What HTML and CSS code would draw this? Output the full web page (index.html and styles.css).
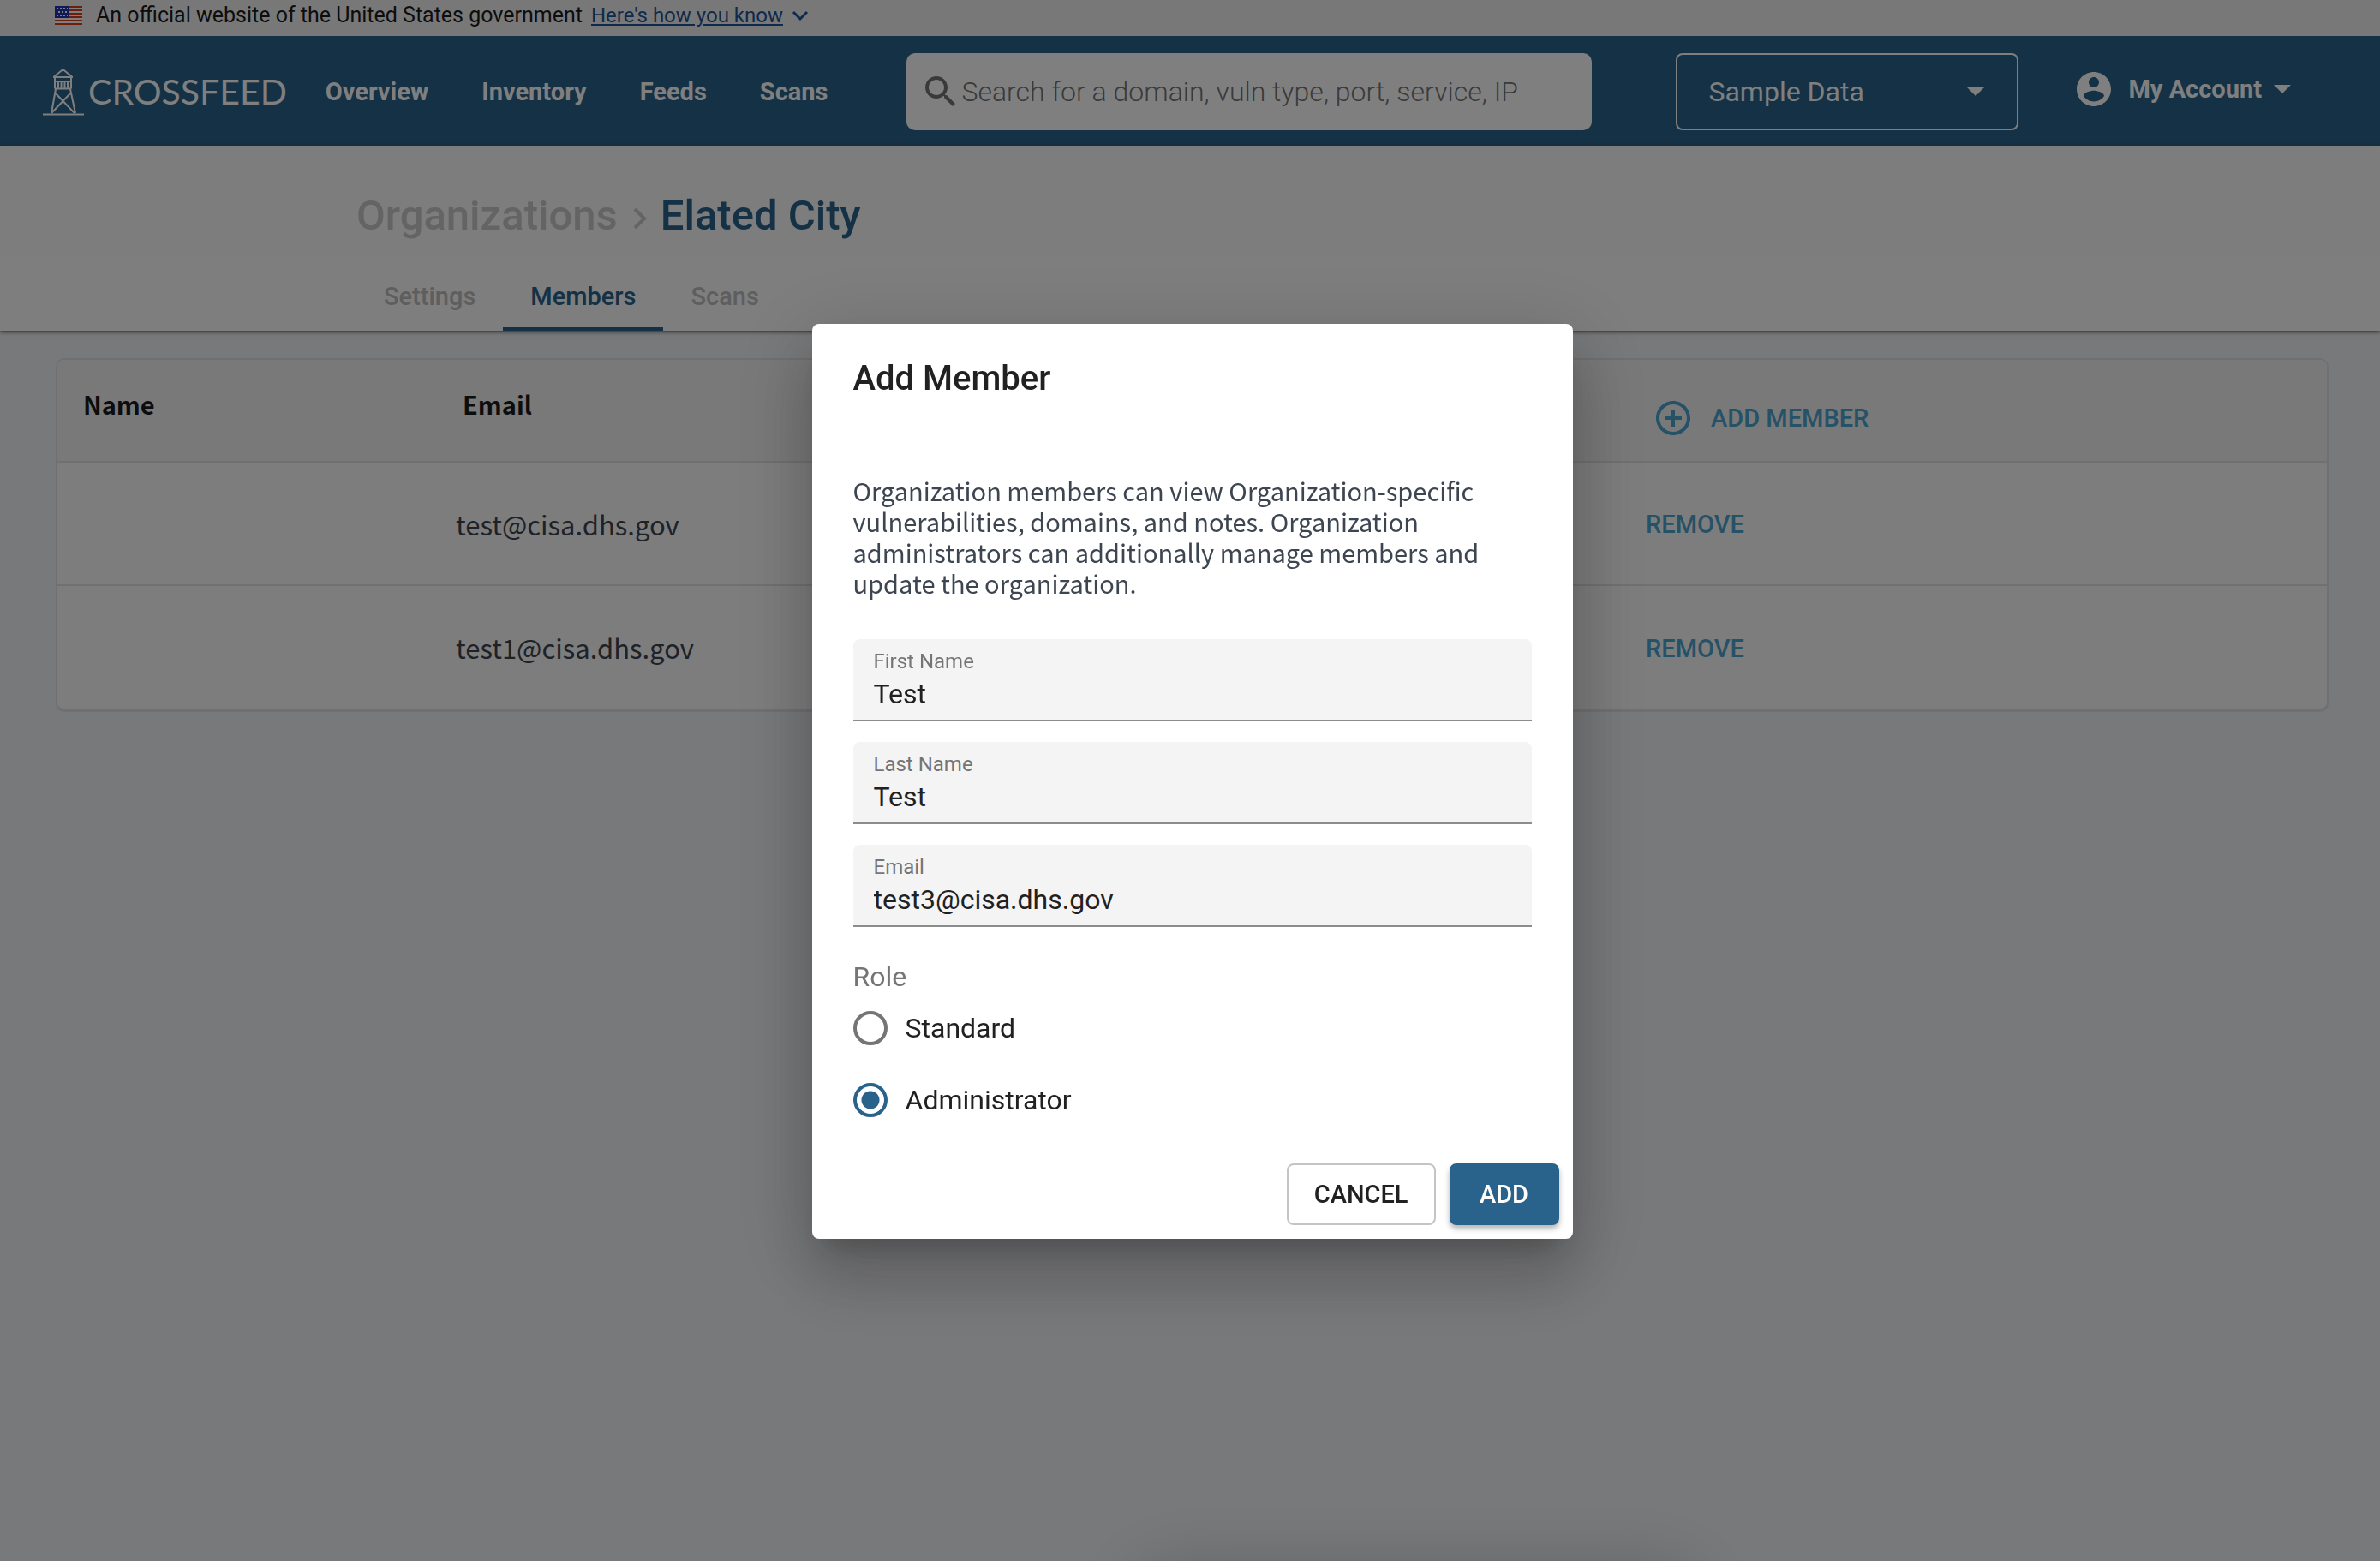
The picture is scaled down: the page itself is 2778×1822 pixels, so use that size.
FILE: index.html
```html
<!DOCTYPE html>
<html lang="en">
<head>
<meta charset="utf-8">
<meta name="viewport" content="width=device-width, initial-scale=1">
<title>Crossfeed - Elated City</title>
<link rel="stylesheet" href="styles.css">
</head>
<body>
<div class="banner">
  <svg class="flag" viewBox="0 0 32 22" aria-hidden="true">
    <rect width="32" height="22" fill="#fff"/>
    <path d="M0 1h32M0 5h32M0 9h32M0 13h32M0 17h32M0 21h32" stroke="#db3e1f" stroke-width="2"/>
    <rect width="16" height="14" fill="#1e33b1"/>
    <path d="M2 3h13M4 7h11M2 11h13" stroke="#fff" stroke-width="2" stroke-dasharray="2 2"/>
  </svg>
  <span>An official website of the United States government</span>
  <a class="banner-link" href="#">Here's how you know</a>
  <svg class="banner-chevron" viewBox="0 0 20 14" aria-hidden="true"><path d="M2 3l8 8 8-8" fill="none" stroke="#1f5599" stroke-width="3"/></svg>
</div>

<header class="header">
  <a class="logo" href="#">
    <svg class="logo-tower" viewBox="0 0 48 56" aria-hidden="true">
      <g fill="none" stroke="#fff" stroke-width="2">
        <path d="M13 10.500L23.500 2L34 10.500M12 11h23M14 12v12M33 12v12M14 16h19M13.500 24.500h20M18 16v8M21.500 16v8M25.500 16v8M29 16v8"/>
        <path d="M15 25L10 53M32 25L38 53M14 29L37 53M33 29L10 53"/>
        <path d="M0 54.500h48"/>
      </g>
    </svg>
    <span class="logo-name">CROSSFEED</span>
  </a>
  <nav class="nav">
    <a href="#">Overview</a>
    <a href="#">Inventory</a>
    <a href="#">Feeds</a>
    <a href="#">Scans</a>
  </nav>
  <label class="search">
    <svg class="search-icon" viewBox="0 0 24 24" aria-hidden="true"><path fill="#757575" d="M15.500 14h-.79l-.28-.27C15.410 12.590 16 11.110 16 9.500 16 5.910 13.090 3 9.500 3S3 5.910 3 9.500 5.910 16 9.500 16c1.610 0 3.090-.59 4.230-1.570l.27.28v.79l5 4.990L20.490 19l-4.990-5zm-6 0C7.010 14 5 11.990 5 9.500S7.010 5 9.500 5 14 7.010 14 9.500 11.990 14 9.500 14z"/></svg>
    <input type="text" aria-label="Search" placeholder="Search for a domain, vuln type, port, service, IP">
  </label>
  <div class="org-select">
    <select aria-label="Organization"><option>Sample Data</option></select>
    <svg class="caret" viewBox="0 0 20 10" aria-hidden="true"><path d="M0 0h20L10 10z" fill="#fff"/></svg>
  </div>
  <button class="account" type="button">
    <svg class="account-icon" viewBox="0 0 24 24" aria-hidden="true"><path fill="#fff" d="M12 2C6.480 2 2 6.480 2 12s4.480 10 10 10 10-4.480 10-10S17.520 2 12 2zm0 3c1.660 0 3 1.340 3 3s-1.340 3-3 3-3-1.340-3-3 1.340-3 3-3zm0 14.200c-2.500 0-4.710-1.280-6-3.220.03-1.990 4-3.080 6-3.080 1.990 0 5.970 1.090 6 3.080-1.290 1.940-3.500 3.220-6 3.220z"/></svg>
    <span>My Account</span>
    <svg class="caret" viewBox="0 0 20 10" aria-hidden="true"><path d="M0 0h20L10 10z" fill="#fff"/></svg>
  </button>
</header>

<section class="page-head">
  <h1 class="crumbs"><a href="#">Organizations</a><svg class="crumb-arrow" viewBox="0 0 16 26" aria-hidden="true"><path d="M2 2l11 11L2 24" fill="none" stroke="#c8c8c8" stroke-width="4"/></svg><span>Elated City</span></h1>
  <nav class="tabs">
    <a href="#">Settings</a>
    <a class="active" href="#">Members</a>
    <a href="#">Scans</a>
  </nav>
</section>

<main class="content">
  <div class="card">
    <table class="members">
      <colgroup><col class="col-name"><col><col class="col-actions"></colgroup>
      <thead>
        <tr>
          <th scope="col">Name</th>
          <th scope="col">Email</th>
          <th scope="col">
            <button class="text-button add-member" type="button">
              <svg class="plus" viewBox="0 0 24 24" aria-hidden="true"><path fill="#4ba4cf" d="M13 7h-2v4H7v2h4v4h2v-4h4v-2h-4V7zm-1-5C6.480 2 2 6.480 2 12s4.480 10 10 10 10-4.480 10-10S17.520 2 12 2zm0 18c-4.410 0-8-3.590-8-8s3.590-8 8-8 8 3.590 8 8-3.590 8-8 8z"/></svg>
              ADD MEMBER
            </button>
          </th>
        </tr>
      </thead>
      <tbody>
        <tr><td></td><td>test@cisa.dhs.gov</td><td><button class="text-button" type="button">REMOVE</button></td></tr>
        <tr><td></td><td>test1@cisa.dhs.gov</td><td><button class="text-button" type="button">REMOVE</button></td></tr>
      </tbody>
    </table>
  </div>
</main>

<div class="backdrop">
  <form class="dialog" role="dialog" aria-labelledby="dialog-title">
    <h2 id="dialog-title">Add Member</h2>
    <div class="dialog-body">
      <p>Organization members can view Organization-specific vulnerabilities, domains, and notes. Organization administrators can additionally manage members and update the organization.</p>
      <div class="fields">
        <label class="field"><span>First Name</span><input type="text" value="Test"></label>
        <label class="field"><span>Last Name</span><input type="text" value="Test"></label>
        <label class="field"><span>Email</span><input type="text" value="test3@cisa.dhs.gov"></label>
      </div>
      <fieldset class="roles">
        <legend>Role</legend>
        <label><input type="radio" name="role" value="user">Standard</label>
        <label><input type="radio" name="role" value="admin" checked>Administrator</label>
      </fieldset>
    </div>
    <div class="actions">
      <button class="button" type="button">CANCEL</button>
      <button class="button primary" type="button">ADD</button>
    </div>
  </form>
</div>
</body>
</html>
```
FILE: styles.css
```css
:root {
  --primary: #29628a;
  --sans: Roboto, "Liberation Sans", sans-serif;
  --body: "Noto Sans CJK SC", "Noto Sans", sans-serif;
}

* { box-sizing: border-box; }

body {
  margin: 0;
  min-height: 100vh;
  background: #f0f2f5;
  color: #212121;
  font-family: var(--sans);
  font-size: 29px;
  overflow: hidden;
}

a { color: inherit; text-decoration: none; }
button, input, select { font: inherit; color: inherit; margin: 0; }
button { background: none; border: 0; padding: 0; }
svg { display: block; flex: none; }

/* Government banner */
.banner {
  display: flex;
  align-items: center;
  height: 42px;
  padding: 0 64px 6px;
  background: #f0f0f0;
  color: #1b1b1b;
  font-size: 25px;
  line-height: 34px;
}
.flag { width: 32px; height: 22px; margin-right: 16px; }
.banner .banner-link { margin: 0 10px; color: #1f5599; font-size: 24px; text-decoration: underline; }
.banner-chevron { width: 20px; height: 14px; }

/* Header */
.header {
  display: flex;
  align-items: center;
  height: 128px;
  padding: 2px 50px 0;
  background: var(--primary);
  color: #fff;
  font-weight: 700;
}
.logo { display: flex; align-items: center; gap: 5px; }
.logo-tower { width: 48px; height: 56px; }
.logo-name { font-family: Lato, sans-serif; font-size: 41px; font-weight: 400; line-height: 56px; }
.nav { display: flex; gap: 62px; margin: 0 92px 0 45px; }
.search {
  display: flex;
  align-items: center;
  width: 800px;
  height: 90px;
  padding: 0 16px;
  border-radius: 10px;
  background: #fff;
}
.search-icon { width: 48px; height: 48px; }
.search input {
  flex: 1;
  min-width: 0;
  padding: 0;
  border: 0;
  outline: 0;
  background: none;
  font-size: 32px;
  font-weight: 300;
}
.search input::placeholder { color: #757575; opacity: 1; }
.org-select { position: relative; width: 400px; height: 90px; margin: 0 64px 0 98px; }
.org-select select {
  width: 100%;
  height: 100%;
  padding: 0 36px;
  border: 2px solid #fff;
  border-radius: 8px;
  background: none;
  appearance: none;
  font-size: 32px;
  font-weight: 400;
}
.caret { width: 20px; height: 10px; }
.org-select .caret { position: absolute; right: 40px; top: 40px; pointer-events: none; }
.account { display: flex; align-items: center; height: 90px; padding-bottom: 6px; }
.account-icon { width: 48px; height: 48px; margin-right: 16px; }
.account .caret { margin-left: 14px; }

/* Page heading and tabs */
.page-head {
  position: relative;
  background: #fafafa;
  box-shadow: 0 2px 4px rgba(0, 0, 0, .5);
}
.crumbs {
  display: flex;
  align-items: center;
  height: 130px;
  margin: 0;
  padding: 32px 416px 0;
  color: var(--primary);
  font-size: 49px;
  font-weight: 500;
}
.crumbs a { color: #c8c8c8; }
.crumb-arrow { width: 16px; height: 26px; margin: 8px 16px 0 18px; }
.tabs { display: flex; height: 86px; padding: 0 416px; background: #fcfcfc; color: #bdbdbd; font-weight: 500; }
.tabs a { display: flex; align-items: center; padding: 10px 32px 0; border-bottom: 4px solid transparent; }
.tabs .active { border-color: var(--primary); color: var(--primary); }

/* Members table */
.content { padding: 32px 60px 32px 65px; }
.card {
  border: 2px solid #e0e0e0;
  border-bottom-width: 4px;
  border-radius: 10px;
  background: #fafafa;
  overflow: hidden;
}
.members {
  width: 100%;
  border-collapse: collapse;
  table-layout: fixed;
  color: #3d4551;
  font-family: var(--body);
  font-size: 31px;
}
.col-name { width: 449px; }
.col-actions { width: 827px; }
.members th {
  height: 119px;
  padding: 30px 24px 0;
  background: #f2f2f2;
  color: #1b1b1b;
  font-size: 29px;
  font-weight: 700;
  line-height: 42px;
  text-align: left;
  vertical-align: top;
}
.members th:first-child { padding-left: 30px; }
.members td { height: 144px; padding: 0 16px; }
.members tbody td { border-top: 2px solid #e0e0e0; }
.text-button {
  padding: 0 16px;
  color: #4ba4cf;
  font-family: var(--sans);
  font-size: 29px;
  font-weight: 500;
  line-height: 48px;
}
.add-member { display: flex; align-items: center; gap: 20px; margin-top: 14px; }
.plus { width: 48px; height: 48px; }

/* Dialog */
.backdrop {
  position: fixed;
  inset: 0;
  display: flex;
  align-items: center;
  justify-content: center;
  padding: 2px 0 0 5px;
  background: rgba(0, 0, 0, .5);
  overflow: hidden;
}
.backdrop::after {
  content: "";
  position: absolute;
  top: 100%;
  left: 50%;
  width: 640px;
  height: 120px;
  margin: 16px 0 0 -56px;
  box-shadow: 0 0 90px rgba(0, 0, 0, .22);
}
.dialog {
  width: 888px;
  border-radius: 8px;
  background: #fff;
  box-shadow:
    0 22px 30px -14px rgba(0, 0, 0, .2),
    0 48px 76px 6px rgba(0, 0, 0, .14),
    0 18px 92px 16px rgba(0, 0, 0, .12);
}
.dialog h2 { margin: 0; padding: 32px 48px; font-size: 40px; font-weight: 500; line-height: 64px; }
.dialog-body { padding: 48px 48px 16px; }
.dialog p { margin: 0; color: #3d4551; font-family: var(--body); font-size: 29px; line-height: 36px; }
.fields { display: flex; flex-direction: column; gap: 24px; margin-top: 48px; }
.field {
  display: flex;
  flex-direction: column;
  height: 96px;
  padding: 10px 24px 0;
  border-bottom: 2px solid #8c8c8c;
  border-radius: 8px 8px 0 0;
  background: #f4f4f4;
}
.field span { color: #757575; font-size: 24px; line-height: 32px; }
.field input { height: 44px; padding: 0; border: 0; outline: 0; background: none; font-size: 32px; }
.roles { margin: 40px 0 0; padding: 0; border: 0; font-size: 32px; }
.roles legend { padding: 0; color: #757575; line-height: 36px; }
.roles label { display: flex; align-items: center; gap: 21px; height: 84px; }
.roles input {
  width: 40px;
  height: 40px;
  border: 4px solid #757575;
  border-radius: 50%;
  appearance: none;
}
.roles input:checked { border-color: var(--primary); background: radial-gradient(circle, var(--primary) 10px, transparent 11px); }
.actions { display: flex; justify-content: flex-end; gap: 16px; padding: 16px; }
.button {
  min-width: 128px;
  height: 72px;
  padding: 0 30px;
  border: 2px solid #c4c4c4;
  border-radius: 8px;
  font-size: 29px;
  font-weight: 500;
}
.button.primary {
  border-color: var(--primary);
  background: var(--primary);
  color: #fff;
  box-shadow: 0 4px 6px rgba(0, 0, 0, .3);
}
```
